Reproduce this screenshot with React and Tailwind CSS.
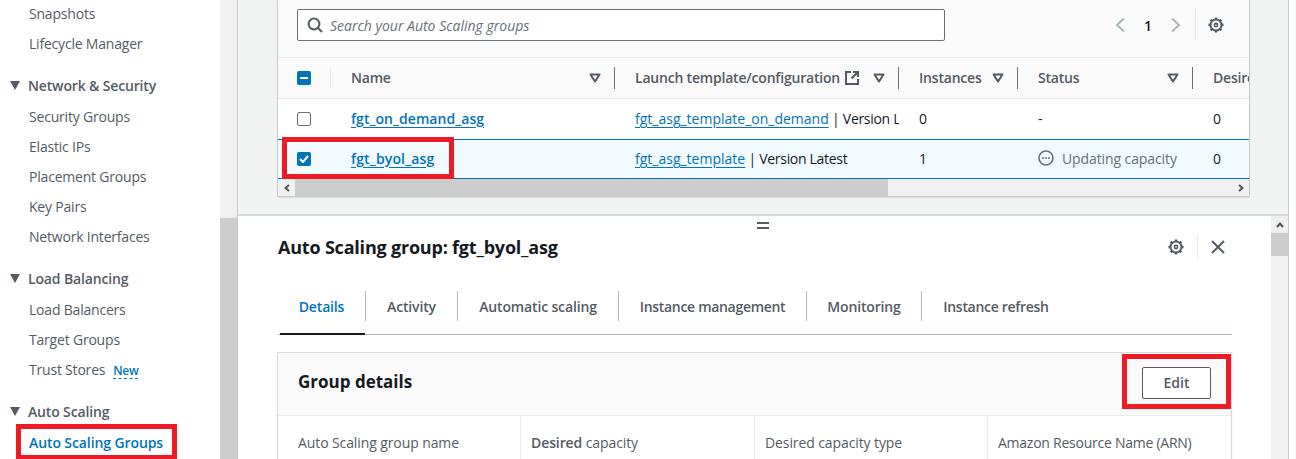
import React from "react";

const font = { fontFamily: '"Open Sans", sans-serif' };

function Caret() {
  return (
    <svg width="12" height="10" viewBox="0 0 12 10" className="shrink-0">
      <path d="M1.5 1.5h9L6 8.5z" fill="none" stroke="#545b64" strokeWidth="2" strokeLinejoin="round" />
    </svg>
  );
}

function NavHead({ children, className = "" }) {
  return (
    <div className={"flex items-center h-[20px] text-[14px] font-semibold tracking-[-0.15px] text-[#545b64] " + className}>
      <svg width="12" height="9" viewBox="0 0 12 9" className="ml-[9px] mr-[7px] shrink-0">
        <path d="M1 0h10L6 9z" fill="#545b64" />
      </svg>
      <span>{children}</span>
    </div>
  );
}

function NavItem({ children, className = "" }) {
  return (
    <div className={"h-[30px] pl-[29px] flex items-center text-[14px] tracking-[-0.2px] text-[#545b64] whitespace-nowrap " + className}>
      {children}
    </div>
  );
}

function Gear() {
  return (
    <svg width="16" height="16" viewBox="0 0 16 16" fill="none" stroke="#545b64" className="shrink-0">
      <circle cx="8" cy="8" r="5.5" strokeWidth="2" />
      <circle cx="8" cy="8" r="1.6" strokeWidth="1.6" />
      <path
        d="M8 0.5v2.5M8 13v2.5M0.5 8h2.5M13 8h2.5M2.7 2.7l1.8 1.8M11.5 11.5l1.8 1.8M13.3 2.7l-1.8 1.8M4.5 11.5l-1.8 1.8"
        strokeWidth="2.4"
      />
    </svg>
  );
}

function HeadCell({ w, divider = true, children, caret = true }) {
  return (
    <div className={"flex items-center shrink-0 h-[22px] pl-[20px] pr-[13px] " + w + " " + (divider ? "border-r border-[#687078]" : "")}>
      <div className="flex-1 min-w-0 flex items-center pb-[2px] text-[14px] font-semibold tracking-[-0.2px] text-[#545b64] whitespace-nowrap">{children}</div>
      {caret && <Caret />}
    </div>
  );
}

function Cell({ w, children, className = "" }) {
  return (
    <div className={"shrink-0 pl-[20px] pb-[2px] text-[14px] text-[#16191f] whitespace-nowrap overflow-hidden " + w + " " + className}>
      {children}
    </div>
  );
}

function ArrowBtn({ dir }) {
  return (
    <svg width="8" height="6" viewBox="0 0 8 6" className={dir === "l" ? "-rotate-90" : dir === "r" ? "rotate-90" : ""}>
      <path d="M1 5l3-3.5L7 5" fill="none" stroke="#505050" strokeWidth="2" />
    </svg>
  );
}

function Tab({ children, w, active = false, divider = true, tight = false }) {
  return (
    <div className={"shrink-0 h-[30px] flex items-center justify-center text-[14px] font-semibold whitespace-nowrap " + (tight ? "tracking-[-0.3px] " : "tracking-[-0.15px] ") + w + " " + (active ? "text-[#0073bb] " : "text-[#545b64] ") + (divider ? "border-r border-[#aab7b8]" : "")}>
      {children}
    </div>
  );
}

function Dt({ w, children, border = true, tight = false }) {
  return (
    <div className={"shrink-0 h-[43px] pl-[10px] pt-[13px] text-[14px] leading-[27px] text-[#545b64] whitespace-nowrap " + (tight ? "tracking-[-0.25px] " : "tracking-[-0.1px] ") + w + " " + (border ? "border-r border-[#eaeded]" : "")}>
      {children}
    </div>
  );
}

export default function App() {
  return (
    <div style={font} className="flex w-[1296px] h-[459px] overflow-hidden bg-white">
      {/* sidebar */}
      <nav className="w-[220px] shrink-0 bg-white">
        <NavItem className="mt-[-2px]">Snapshots</NavItem>
        <NavItem>Lifecycle Manager</NavItem>
        <NavHead className="mt-[17px] mb-[6px]">Network &amp; Security</NavHead>
        <NavItem>Security Groups</NavItem>
        <NavItem>Elastic IPs</NavItem>
        <NavItem>Placement Groups</NavItem>
        <NavItem>Key Pairs</NavItem>
        <NavItem>Network Interfaces</NavItem>
        <NavHead className="mt-[17px] mb-[6px]">Load Balancing</NavHead>
        <NavItem>Load Balancers</NavItem>
        <NavItem>Target Groups</NavItem>
        <NavItem>
          Trust Stores
          <span className="ml-[8px] mt-[4px] text-[12px] font-semibold tracking-[-0.3px] text-[#0073bb] border-b border-dashed border-[#0073bb] leading-[14px]">New</span>
        </NavItem>
        <NavHead className="mt-[17px] mb-[6px]">Auto Scaling</NavHead>
        <div className="relative h-[30px] pl-[29px] flex items-center text-[14px] font-semibold tracking-[-0.1px] text-[#0073bb] whitespace-nowrap">
          Auto Scaling Groups
          <div className="absolute left-[16px] top-[-3px] w-[161px] h-[36px] border-[5px] border-[#ed1c24]"></div>
        </div>
      </nav>

      {/* sidebar scrollbar */}
      <div className="w-[17px] shrink-0 bg-[#f0f0f0] flex flex-col">
        <div className="h-[218px] shrink-0"></div>
        <div className="flex-1 bg-[#cdcdcd]"></div>
      </div>

      {/* main */}
      <main className="w-[1052px] shrink-0 flex flex-col border-x border-[#c4c8cc]">
        <section className="h-[216px] shrink-0 bg-[#f2f3f3] border-b-2 border-[#d5dbdb] pl-[39px]">
          <div className="w-[973px] h-[197px] border-x border-b border-[#c6cbce] rounded-b-[2px] bg-white shadow-[0_1px_1px_rgba(0,0,0,0.1)] flex flex-col">
            {/* toolbar */}
            <div className="h-[58px] shrink-0 bg-[#fafafa] flex items-start pt-[9px] pl-[19px] border-b border-[#eaeded]">
              <div className="w-[648px] h-[32px] border border-[#687078] rounded-[2px] bg-white flex items-center pl-[9px] text-[14px] italic text-[#687078]">
                <svg width="16" height="16" viewBox="0 0 16 16" fill="none" stroke="#545b64" strokeWidth="2" className="mr-[7px]">
                  <circle cx="7" cy="7" r="5.4" />
                  <path d="M11 11l4 4" />
                </svg>
                Search your Auto Scaling groups
              </div>
              <div className="flex items-center h-[32px] ml-[169px]">
                <svg width="12" height="16" viewBox="0 0 12 16" fill="none" stroke="#aab7b8" strokeWidth="2"><path d="M10 1.5L3 8l7 6.5" /></svg>
                <span className="w-[44px] text-center text-[14px] font-semibold text-[#16191f]">1</span>
                <svg width="12" height="16" viewBox="0 0 12 16" fill="none" stroke="#aab7b8" strokeWidth="2"><path d="M2 1.5L9 8l-7 6.5" /></svg>
                <div className="w-px h-[32px] bg-[#eaeded] ml-[13px] mr-[12px]"></div>
                <Gear />
              </div>
            </div>

            {/* header */}
            <div className="h-[41px] shrink-0 bg-[#fafafa] border-b border-[#eaeded] flex items-center overflow-hidden">
              <div className="w-[53px] h-[22px] shrink-0 pl-[19px] flex items-center border-r border-[#eaeded]">
                <div className="w-[14px] h-[14px] rounded-[2px] bg-[#0073bb] flex items-center justify-center">
                  <div className="w-[8px] h-[2px] bg-white"></div>
                </div>
              </div>
              <HeadCell w="w-[284px]">Name</HeadCell>
              <HeadCell w="w-[284px]">
                <span className="mr-[5px]">Launch template/configuration</span>
                <svg width="14" height="14" viewBox="0 0 14 14" fill="none" stroke="#545b64" strokeWidth="2" className="shrink-0 mt-[2px]">
                  <path d="M6 1H1v12h12V8M8 1h5v5M13 1L6.5 7.5" />
                </svg>
              </HeadCell>
              <HeadCell w="w-[119px]">Instances</HeadCell>
              <HeadCell w="w-[175px]">Status</HeadCell>
              <HeadCell w="w-[75px]" divider={false} caret={false}>Desired</HeadCell>
            </div>

            {/* rows */}
            <div className="h-[40px] shrink-0 flex items-center overflow-hidden">
              <div className="w-[53px] shrink-0 pl-[19px]">
                <div className="w-[14px] h-[14px] rounded-[2px] border border-[#687078] bg-white"></div>
              </div>
              <Cell w="w-[284px]"><span className="font-semibold tracking-[0.05px] text-[#0073bb] underline underline-offset-[3px]">fgt_on_demand_asg</span></Cell>
              <Cell w="w-[284px]"><span className="text-[#0073bb] underline underline-offset-[3px]">fgt_asg_template_on_demand</span><span className="tracking-[-0.3px]"> | Version Latest</span></Cell>
              <Cell w="w-[119px]">0</Cell>
              <Cell w="w-[175px]">-</Cell>
              <Cell w="w-[58px]">0</Cell>
            </div>
            <div className="relative h-[40px] shrink-0 flex items-center bg-[#f1faff] border-y border-[#0073bb]">
              <div className="w-[53px] shrink-0 pl-[19px]">
                <div className="w-[14px] h-[14px] rounded-[2px] bg-[#0073bb] flex items-center justify-center">
                  <svg width="10" height="8" viewBox="0 0 10 8" fill="none" stroke="white" strokeWidth="2"><path d="M1 4l3 3 5-6" /></svg>
                </div>
              </div>
              <Cell w="w-[284px]"><span className="font-semibold tracking-[0.15px] text-[#0073bb] underline underline-offset-[3px]">fgt_byol_asg</span></Cell>
              <Cell w="w-[284px]"><span className="text-[#0073bb] underline underline-offset-[3px]">fgt_asg_template</span><span className="tracking-[-0.3px]"> | Version Latest</span></Cell>
              <Cell w="w-[119px]">1</Cell>
              <Cell w="w-[175px]">
                <span className="flex items-center text-[#687078] tracking-[-0.1px]">
                  <svg width="16" height="16" viewBox="0 0 16 16" fill="none" stroke="#687078" strokeWidth="1.6" className="mr-[8px]">
                    <circle cx="8" cy="8" r="7" />
                    <path d="M4 8h2M7 8h2M10 8h2" strokeWidth="1.6" />
                  </svg>
                  Updating capacity
                </span>
              </Cell>
              <Cell w="w-[58px]">0</Cell>
              <div className="absolute left-[4px] top-[-3px] w-[172px] h-[42px] border-[5px] border-[#ed1c24]"></div>
            </div>

            {/* horizontal scrollbar */}
            <div className="h-[17px] shrink-0 bg-[#f0f0f0] flex items-center">
              <div className="w-[17px] flex justify-center"><ArrowBtn dir="l" /></div>
              <div className="w-[593px] h-full bg-[#cdcdcd]"></div>
              <div className="flex-1"></div>
              <div className="w-[17px] flex justify-center"><ArrowBtn dir="r" /></div>
            </div>
          </div>
        </section>

        {/* split panel */}
        <section className="relative flex-1 min-h-0 flex bg-white overflow-hidden">
          <div className="absolute left-[519px] top-[6px] w-[12px] h-[7px] border-y-2 border-[#545b64]"></div>
          <div className="w-[1033px] shrink-0 pl-[39px] pr-[39px]">
            <div className="h-[43px] flex items-end justify-between pl-[1px]">
              <h2 className="text-[18px] font-bold tracking-[-0.2px] text-[#16191f] leading-[24px]">Auto Scaling group: fgt_byol_asg</h2>
              <div className="flex items-center h-[24px] mr-[7px]">
                <Gear />
                <div className="w-px h-[24px] bg-[#eaeded] mx-[13px]"></div>
                <svg width="14" height="14" viewBox="0 0 14 14" fill="none" stroke="#545b64" strokeWidth="2"><path d="M1 1l12 12M13 1L1 13" /></svg>
              </div>
            </div>
            <div className="relative ml-[1px] mt-[32px] h-[44px] border-b border-[#aab7b8] flex items-start">
              <Tab active w="w-[88px]">Details</Tab>
              <Tab w="w-[92px]">Activity</Tab>
              <Tab w="w-[161px]">Automatic scaling</Tab>
              <Tab tight w="w-[188px]">Instance management</Tab>
              <Tab w="w-[115px]">Monitoring</Tab>
              <Tab tight w="w-[148px]" divider={false}>Instance refresh</Tab>
              <div className="absolute left-[2px] bottom-[-1px] w-[85px] h-[2px] bg-[#16191f]"></div>
            </div>
            <div className="mt-[17px] border border-[#d5dbdb] bg-white shadow-[0_1px_1px_rgba(0,0,0,0.1)]">
              <div className="relative h-[63px] bg-[#fafafa] border-b border-[#eaeded] flex items-center pl-[20px]">
                <h3 className="text-[17px] font-bold text-[#16191f] pb-[5px]">Group details</h3>
                <div className="ml-auto mr-[20px] mb-[2px] pb-[2px] w-[69px] h-[32px] border border-[#545b64] rounded-[2px] bg-white flex items-center justify-center text-[14px] font-semibold text-[#545b64]">Edit</div>
                <div className="absolute right-0 top-[1px] w-[109px] h-[55px] border-[5px] border-[#ed1c24]"></div>
              </div>
              <div className="flex pl-[10px]">
                <Dt w="w-[233px]">Auto Scaling group name</Dt>
                <Dt w="w-[234px]"><b className="font-semibold">Desired</b> capacity</Dt>
                <Dt w="w-[233px]">Desired capacity type</Dt>
                <Dt tight w="w-[233px]" border={false}>Amazon Resource Name (ARN)</Dt>
              </div>
            </div>
          </div>
          {/* right scrollbar */}
          <div className="w-[17px] shrink-0 bg-[#f0f0f0] flex flex-col">
            <div className="h-[17px] flex items-center justify-center"><ArrowBtn /></div>
            <div className="h-[23px] bg-[#cdcdcd]"></div>
          </div>
        </section>
      </main>
    </div>
  );
}
